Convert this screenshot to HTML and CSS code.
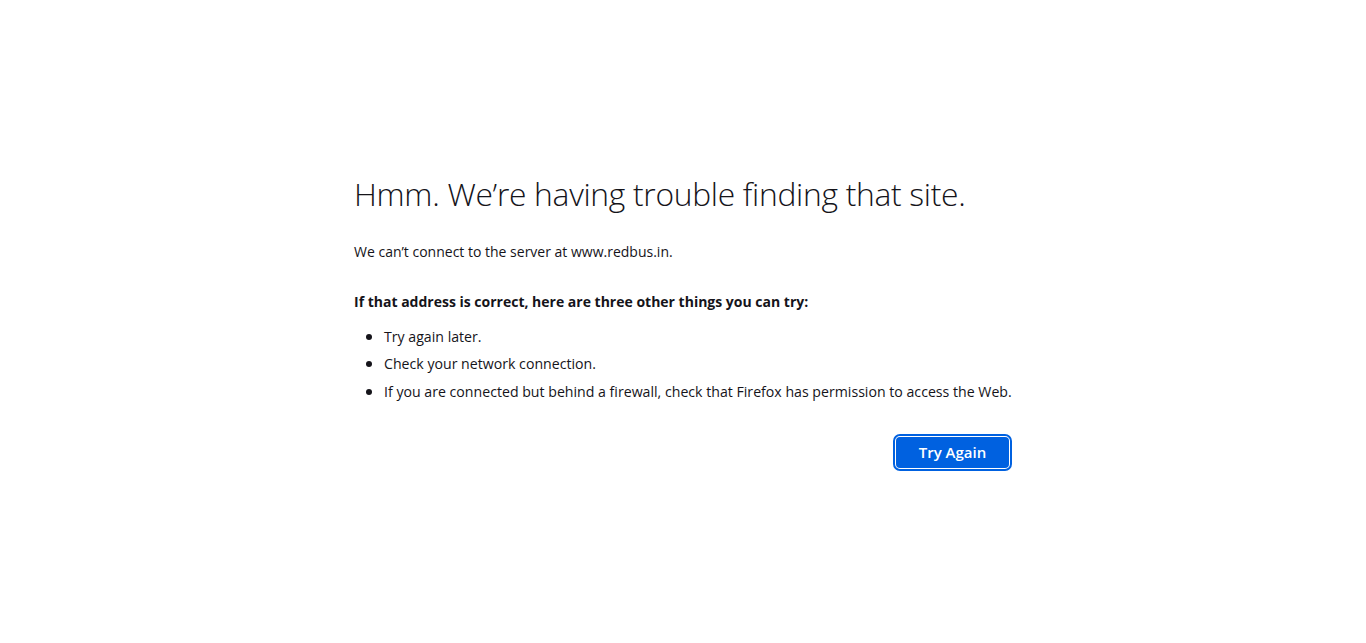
FILE: index.html
```html
<!DOCTYPE html>
<html lang="en">
<head>
<meta charset="utf-8">
<title>Server Not Found</title>
<link rel="stylesheet" href="styles.css">
</head>
<body>
<div class="container">
  <h1 class="title">Hmm. We’re having trouble finding that site.</h1>
  <p class="desc">We can’t connect to the server at www.redbus.in.</p>
  <p class="strong">If that address is correct, here are three other things you can try:</p>
  <ul class="tips">
    <li>Try again later.</li>
    <li>Check your network connection.</li>
    <li>If you are connected but behind a firewall, check that Firefox has permission to access the Web.</li>
  </ul>
  <div class="actions">
    <button class="primary">Try Again</button>
  </div>
</div>
</body>
</html>
```
FILE: styles.css
```css
html, body {
  margin: 0;
  padding: 0;
  height: 100%;
  background: #ffffff;
}
body {
  display: flex;
  align-items: center;
  justify-content: center;
  font-family: "Open Sans", "Noto Sans", sans-serif;
  color: #15141a;
  font-size: 14px;
}
.container {
  width: 658px;
}
.title {
  font-weight: 300;
  font-size: 31.8px;
  line-height: 1.2;
  margin: 0 0 27px;
  letter-spacing: -0.3px;
}
.desc {
  margin: 0 0 28px;
  line-height: 22px;
}
.strong {
  font-weight: 700;
  margin: 0 0 12px;
  line-height: 22px;
}
.tips {
  margin: 0;
  padding-left: 30px;
}
.tips li {
  height: 22px;
  line-height: 22px;
  margin-bottom: 5.5px;
  font-size: 14.15px;
}
.tips li::marker {
  font-size: 16px;
}
.actions {
  display: flex;
  justify-content: flex-end;
  margin-top: 35px;
  padding-right: 3px;
}
.primary {
  font-family: inherit;
  font-size: 15px;
  font-weight: 600;
  color: #fff;
  background: #0061e0;
  border: none;
  border-radius: 4px;
  padding: 0;
  width: 113px;
  height: 31px;
  outline: 2px solid #0061e0;
  outline-offset: 1px;
}
```
